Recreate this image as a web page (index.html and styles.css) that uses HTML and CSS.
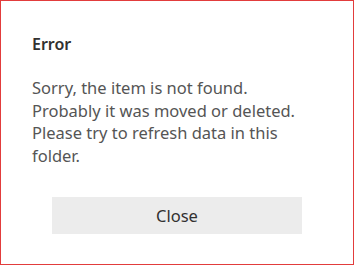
FILE: index.html
```html
<!DOCTYPE html>
<html>
<head>
<meta charset="utf-8">
<link rel="stylesheet" href="styles.css">
</head>
<body>
<div class="dialog">
  <h1 class="title">Error</h1>
  <p class="message">Sorry, the item is not found. Probably it was moved or deleted. Please try to refresh data in this folder.</p>
  <div class="actions">
    <button class="btn">Close</button>
  </div>
</div>
</body>
</html>
```
FILE: styles.css
```css
html, body {
  margin: 0;
  padding: 0;
  background: #fff;
}
.dialog {
  box-sizing: border-box;
  width: 354px;
  height: 265px;
  border: 1px solid #e23c3c;
  padding: 33px 31px 0 31px;
  font-family: "Noto Sans", "Open Sans", sans-serif;
  color: #323130;
}
.title {
  margin: 0;
  font-size: 16px;
  font-weight: 600;
  line-height: 20px;
}
.message {
  margin: 23px 0 0 0;
  font-size: 16.5px;
  line-height: 22.5px;
  color: #555555;
  width: 275px;
}
.actions {
  display: flex;
  justify-content: center;
  margin-top: 30px;
}
.btn {
  width: 250px;
  height: 37px;
  border: none;
  background: #ececec;
  font-family: inherit;
  font-size: 16.5px;
  color: #323130;
  padding: 0;
}
```
